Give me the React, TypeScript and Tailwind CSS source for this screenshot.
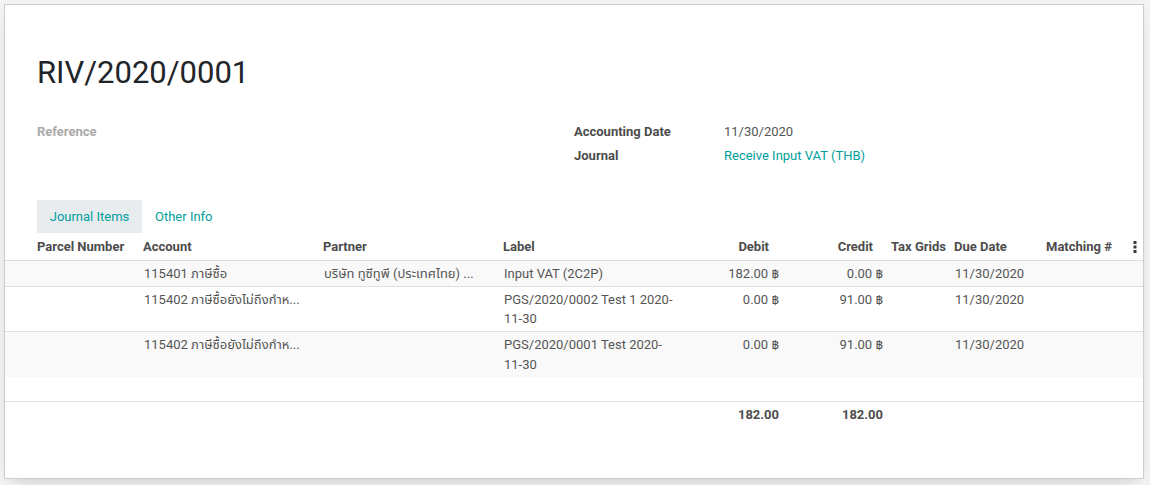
import type { ReactNode } from "react";

const font = { fontFamily: "Roboto, 'Noto Sans', 'Noto Sans Thai', 'DejaVu Sans', sans-serif" };

type Line = {
  account: string;
  partner: string;
  label: string;
  debit: string;
  credit: string;
  due: string;
  striped: boolean;
};

const lines: Line[] = [
  {
    account: "115401 ภาษีซื้อ",
    partner: "บริษัท ทูซีทูพี (ประเทศไทย) ...",
    label: "Input VAT (2C2P)",
    debit: "182.00 ฿",
    credit: "0.00 ฿",
    due: "11/30/2020",
    striped: true,
  },
  {
    account: "115402 ภาษีซื้อยังไม่ถึงกำห...",
    partner: "",
    label: "PGS/2020/0002 Test 1 2020-11-30",
    debit: "0.00 ฿",
    credit: "91.00 ฿",
    due: "11/30/2020",
    striped: false,
  },
  {
    account: "115402 ภาษีซื้อยังไม่ถึงกำห...",
    partner: "",
    label: "PGS/2020/0001 Test 2020-11-30",
    debit: "0.00 ฿",
    credit: "91.00 ฿",
    due: "11/30/2020",
    striped: true,
  },
];

function Th({ children, className = "" }: { children?: ReactNode; className?: string }) {
  return (
    <th className={`h-[27px] px-[4px] align-middle font-bold text-[#4c4c4c] ${className}`}>{children}</th>
  );
}

function Td({ children, className = "" }: { children?: ReactNode; className?: string }) {
  return <td className={`pl-[5px] pr-[4px] pt-[3px] pb-[2.5px] align-top ${className}`}>{children}</td>;
}

function KebabIcon() {
  return (
    <svg width="4" height="12" viewBox="0 0 4 12" className="inline-block">
      <rect x="0.5" y="0" width="3" height="3" fill="#3a3a3a" />
      <rect x="0.5" y="4.5" width="3" height="3" fill="#3a3a3a" />
      <rect x="0.5" y="9" width="3" height="3" fill="#3a3a3a" />
    </svg>
  );
}

export default function App() {
  return (
    <div className="h-[485px] w-[1150px] overflow-hidden bg-[#f3f3f3]" style={font}>
      <div className="ml-[4px] mt-[4px] h-[475px] w-[1140px] border border-[#c9cdd4] bg-white text-[13px] leading-[19.5px] text-[#555] shadow-[0_6px_16px_-8px_rgba(0,0,0,0.25)]">
        <div className="px-[32px] pt-[49px]">
          <h1 className="text-[31px] leading-[37px] font-normal text-[#212529]">RIV/2020/0001</h1>

          <div className="mt-[29px] flex">
            <div className="w-[537px]">
              <div className="flex h-[24px] items-center font-bold text-[#aaaaaa]">Reference</div>
            </div>
            <div className="flex-1">
              <div className="flex h-[24px] items-center">
                <div className="w-[150px] font-bold text-[#4c4c4c]">Accounting Date</div>
                <div>11/30/2020</div>
              </div>
              <div className="flex h-[24px] items-center">
                <div className="w-[150px] font-bold text-[#4c4c4c]">Journal</div>
                <div className="text-[#00a09d]">Receive Input VAT (THB)</div>
              </div>
            </div>
          </div>

          <div className="mt-[32px] flex h-[33px] text-[#00a09d]">
            <div className="flex w-[105px] items-center justify-center bg-[#e9ecef]">Journal Items</div>
            <div className="flex items-center px-[13px]">Other Info</div>
          </div>
        </div>

        <table className="w-[1138px] table-fixed border-collapse">
          <colgroup>
            <col className="w-[134px]" />
            <col className="w-[180px]" />
            <col className="w-[180px]" />
            <col className="w-[180px]" />
            <col className="w-[104px]" />
            <col className="w-[104px]" />
            <col className="w-[63px]" />
            <col className="w-[92px]" />
            <col className="w-[73px]" />
            <col className="w-[28px]" />
          </colgroup>
          <thead>
            <tr className="border-b border-[#dcdfe3] text-left">
              <Th className="pl-[32px] whitespace-nowrap">Parcel Number</Th>
              <Th>Account</Th>
              <Th>Partner</Th>
              <Th>Label</Th>
              <Th className="pr-[14px] text-right">Debit</Th>
              <Th className="pr-[14px] text-right">Credit</Th>
              <Th className="whitespace-nowrap">Tax Grids</Th>
              <Th className="whitespace-nowrap">Due Date</Th>
              <Th className="whitespace-nowrap">Matching #</Th>
              <Th className="pl-[18px]">
                <KebabIcon />
              </Th>
            </tr>
          </thead>
          <tbody>
            {lines.map((l, i) => (
              <tr
                key={i}
                className={`${l.striped ? "bg-[#f9f9f9]" : "bg-white"} ${i < lines.length - 1 ? "border-b border-[#dcdfe3]" : ""}`}
              >
                <Td className="pl-[32px]" />
                <Td className="whitespace-nowrap">{l.account}</Td>
                <Td className="whitespace-nowrap">{l.partner}</Td>
                <Td>{l.label}</Td>
                <Td className="text-right whitespace-nowrap">{l.debit}</Td>
                <Td className="text-right whitespace-nowrap">{l.credit}</Td>
                <Td />
                <Td className="whitespace-nowrap">{l.due}</Td>
                <Td />
                <Td />
              </tr>
            ))}
            <tr className="h-[25px]">
              <td colSpan={10} />
            </tr>
          </tbody>
          <tfoot>
            <tr className="border-t border-[#dcdfe3] font-bold text-[#4c4c4c]">
              <td className="h-[25px] px-[4px]" colSpan={4} />
              <td className="px-[4px] text-right">182.00</td>
              <td className="px-[4px] text-right">182.00</td>
              <td colSpan={4} />
            </tr>
          </tfoot>
        </table>
      </div>
    </div>
  );
}
